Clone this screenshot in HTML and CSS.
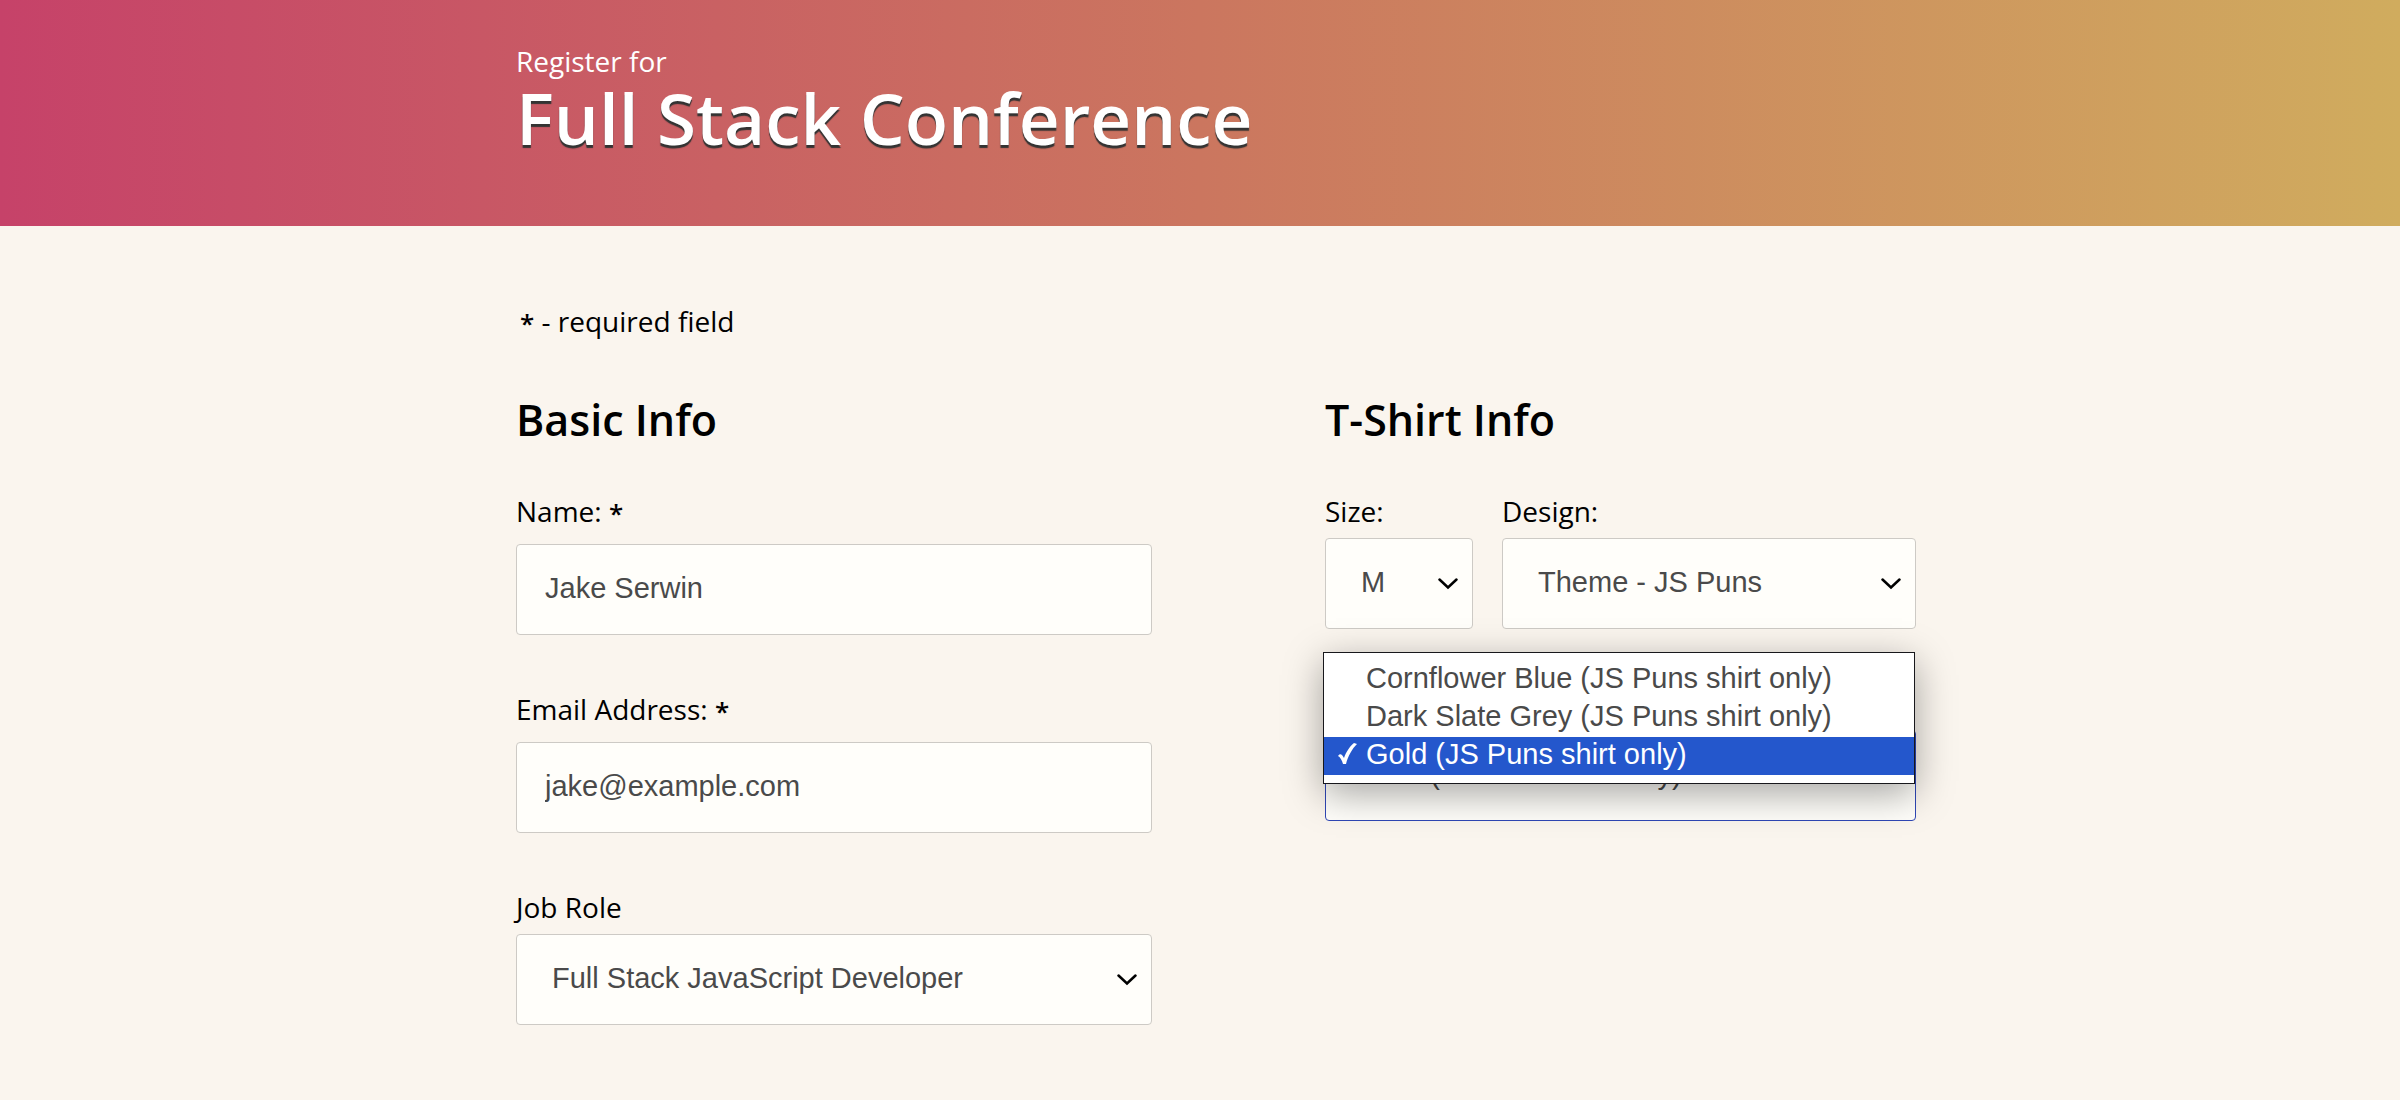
FILE: index.html
```html
<!DOCTYPE html>
<html lang="en">
<head>
<meta charset="utf-8">
<meta name="viewport" content="width=device-width, initial-scale=1">
<title>Register for Full Stack Conference</title>
<link rel="stylesheet" href="styles.css">
</head>
<body>
<header class="banner">
  <div class="container">
    <span class="banner-lead">Register for</span>
    <h1 class="banner-title">Full Stack Conference</h1>
  </div>
</header>
<main class="container page">
  <p class="note"><span class="asterisk">*</span> - required field</p>
  <form class="columns">
    <fieldset class="group">
      <legend class="heading">Basic Info</legend>
      <div class="fields">
        <div class="field">
          <label for="name">Name: <span class="asterisk">*</span></label>
          <input class="control text" type="text" id="name" value="Jake Serwin">
        </div>
        <div class="field">
          <label for="email">Email Address: <span class="asterisk">*</span></label>
          <input class="control text" type="email" id="email" value="jake@example.com">
        </div>
        <div class="field choice">
          <label for="role">Job Role</label>
          <div class="select">
            <select class="control" id="role"><option>Full Stack JavaScript Developer</option></select>
            <svg class="chevron" viewBox="0 0 20 12" aria-hidden="true"><path d="M1.5 1.5 10 9.500 18.500 1.500"/></svg>
          </div>
        </div>
      </div>
    </fieldset>
    <fieldset class="group">
      <legend class="heading">T-Shirt Info</legend>
      <div class="fields">
        <div class="pair">
          <div class="field choice">
            <label for="size">Size:</label>
            <div class="select">
              <select class="control" id="size"><option>M</option></select>
              <svg class="chevron" viewBox="0 0 20 12" aria-hidden="true"><path d="M1.5 1.5 10 9.500 18.500 1.500"/></svg>
            </div>
          </div>
          <div class="field choice">
            <label for="design">Design:</label>
            <div class="select">
              <select class="control" id="design"><option>Theme - JS Puns</option></select>
              <svg class="chevron" viewBox="0 0 20 12" aria-hidden="true"><path d="M1.5 1.5 10 9.500 18.500 1.500"/></svg>
            </div>
          </div>
        </div>
        <div class="field choice">
          <label for="color">Color:</label>
          <div class="select">
            <select class="control active" id="color"><option>Gold (JS Puns shirt only)</option></select>
            <ul class="menu" role="listbox" aria-label="Color">
              <li class="item" role="option">Cornflower Blue (JS Puns shirt only)</li>
              <li class="item" role="option">Dark Slate Grey (JS Puns shirt only)</li>
              <li class="item selected" role="option" aria-selected="true">
                <svg class="check" viewBox="0 0 20 22" aria-hidden="true"><path d="M1 13 C3 10 5 11 7 15 C9 9 13 3 17 0 L20 1 C15 6 11 13 9 21 L6 21 C5 17 3 14 1 13Z"/></svg>
                Gold (JS Puns shirt only)
              </li>
            </ul>
          </div>
        </div>
      </div>
    </fieldset>
  </form>
</main>
</body>
</html>
```
FILE: styles.css
```css
* {
  box-sizing: border-box;
}

body {
  margin: 0;
  background: #faf5ee;
  color: #000;
  font: 28px/34px "Open Sans", "Noto Sans", sans-serif;
}

.container {
  max-width: 1432px;
  margin: 0 auto;
  padding-left: 32px;
}

.banner {
  padding: 44px 0 68px;
  background: linear-gradient(to right, #c64269, #cb765f 50%, #d0ac5e);
  color: #fff;
}

.banner-lead {
  display: block;
  font-weight: 500;
}

.banner-title {
  margin: 0;
  font-size: 71px;
  font-weight: 600;
  line-height: 80px;
  text-shadow: 0 3px 1px #333;
}

.page {
  padding-top: 78px;
  padding-bottom: 76px;
}

.note {
  margin: 0 0 54px;
  padding-left: 4px;
}

.asterisk {
  position: relative;
  top: 1px;
  font-size: 26px;
  font-weight: 600;
  line-height: 1;
}

.columns {
  display: grid;
  grid-template-columns: 636fr 591fr;
  column-gap: 173px;
  align-items: start;
}

.group {
  min-width: 0;
  margin: 0;
  padding: 0;
  border: 0;
}

.heading {
  padding: 0;
  margin-bottom: 46px;
  font-size: 43px;
  font-weight: 600;
  line-height: 56px;
}

.fields {
  display: flex;
  flex-direction: column;
  gap: 57px;
}

.field {
  display: flex;
  flex-direction: column;
  gap: 16px;
  font-weight: 500;
}

.choice {
  gap: 10px;
}

.pair {
  display: grid;
  grid-template-columns: 148fr 414fr;
  column-gap: 29px;
}

.control {
  display: block;
  width: 100%;
  height: 91px;
  margin: 0;
  padding: 0 35px 3px;
  border: 1px solid #cdcac5;
  border-radius: 4px;
  background: #fffefa;
  color: #4a4a4a;
  font: 29px "Liberation Sans", Arial, sans-serif;
  appearance: none;
  outline: 0;
}

.text {
  padding: 0 28px 3px;
}

.active {
  border: 1px solid #2f47b5;
}

.select {
  position: relative;
}

.chevron {
  position: absolute;
  top: 40px;
  right: 15px;
  width: 20px;
  height: 12px;
  fill: none;
  stroke: #000;
  stroke-width: 2.5;
  stroke-linecap: round;
  pointer-events: none;
}

.menu {
  position: absolute;
  left: -2px;
  right: 1px;
  bottom: 37px;
  margin: 0;
  padding: 8px 0;
  border: 1px solid #17171b;
  background: #fff;
  box-shadow: 0 10px 36px rgba(0, 0, 0, 0.35);
  color: #4a4a4a;
  font: 29px/34px "Liberation Sans", Arial, sans-serif;
  list-style: none;
}

.item {
  position: relative;
  padding: 0 0 4px 42px;
  white-space: nowrap;
}

.selected {
  background: #2457cc;
  color: #fff;
}

.check {
  position: absolute;
  left: 13px;
  top: 6px;
  width: 20px;
  height: 22px;
  fill: #fff;
}
```
